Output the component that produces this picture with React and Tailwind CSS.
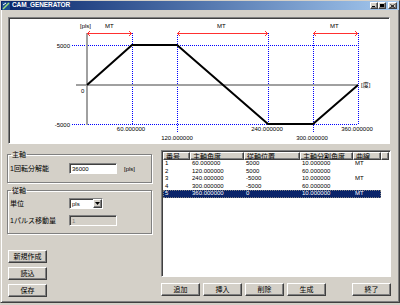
import React from 'react';

const sunken =
  'border border-t-[#808080] border-l-[#808080] border-r-white border-b-white shadow-[inset_1px_1px_0_#404040]';
const raised =
  'border border-t-white border-l-white border-r-[#404040] border-b-[#404040] shadow-[inset_-1px_-1px_0_#808080]';
const groupBox =
  'border border-[#808080] shadow-[inset_1px_1px_0_#fff,1px_1px_0_#fff]';

const ROWS = [
  ['1', '60.000000', '5000', '10.000000', 'MT'],
  ['2', '120.000000', '5000', '60.000000', ''],
  ['3', '240.000000', '-5000', '10.000000', 'MT'],
  ['4', '300.000000', '-5000', '60.000000', ''],
  ['5', '360.000000', '0', '10.000000', 'MT'],
];

const COLS = [
  { label: '番号', w: 'w-[27px]' },
  { label: '主軸角度', w: 'w-[54px]' },
  { label: '従軸位置', w: 'w-[56px]' },
  { label: '主軸分割角度', w: 'w-[53px]' },
  { label: '曲線', w: 'w-[28px]' },
];

const Button = ({ children, className = '' }) => (
  <div
    className={`${raised} bg-[#d4d0c8] h-[13px] w-[39px] flex items-center justify-center text-[7px] leading-none text-black ${className}`}
  >
    {children}
  </div>
);

const TitleBar = () => (
  <div className="h-[9px] flex items-center bg-gradient-to-r from-[#0a246a] to-[#a6caf0] pl-[1px] pr-[2px]">
    <svg width="8" height="8" viewBox="0 0 8 8">
      <rect x="0" y="0" width="8" height="8" fill="#1c4f8c" />
      <path d="M1 7 L7 1" stroke="#9fe07a" strokeWidth="1.5" />
      <path d="M1 3 L4 1" stroke="#ffffff" strokeWidth="1" />
    </svg>
    <span className="ml-[2px] text-[6.5px] font-bold text-white leading-none tracking-[-0.1px]">
      CAM_GENERATOR
    </span>
    <div className="ml-auto flex items-center">
      <div className={`${raised} bg-[#d4d0c8] w-[8px] h-[7px] relative`}>
        <div className="absolute left-[1px] bottom-[1px] w-[3px] h-[1px] bg-black" />
      </div>
      <div className={`${raised} bg-[#d4d0c8] w-[8px] h-[7px] flex items-center justify-center`}>
        <div className="w-[4px] h-[3px] border border-black border-t-2" />
      </div>
      <div className={`${raised} bg-[#d4d0c8] w-[9px] h-[7px] ml-[2px] flex items-center justify-center`}>
        <svg width="5" height="4" viewBox="0 0 5 4">
          <path d="M0.5 0.5 L4.5 3.5 M4.5 0.5 L0.5 3.5" stroke="#000" strokeWidth="1" />
        </svg>
      </div>
    </div>
  </div>
);

const Chart = () => {
  const blue = '#0000ff';
  const red = '#ff3030';
  const arrows = [
    [87, 132],
    [177, 268],
    [313, 358],
  ];
  const verticals = [
    [132.5, 124],
    [177.5, 133],
    [268.5, 124],
    [313.5, 133],
    [358.5, 124],
  ];
  const labels = [
    [131, 131, '60.000000'],
    [177, 140, '120.000000'],
    [267, 131, '240.000000'],
    [312, 140, '300.000000'],
    [357, 131, '360.000000'],
  ];
  return (
    <div className={`${sunken} bg-white ml-[7px] mt-[7px] w-[382px] h-[127px]`}>
      <svg width="380" height="125" viewBox="9 18 380 125" className="block font-['Liberation_Sans','Noto_Sans_CJK_JP',sans-serif]">
        <line x1="72" y1="45.5" x2="358" y2="45.5" stroke={blue} strokeDasharray="1 1" />
        <line x1="72" y1="124.5" x2="358" y2="124.5" stroke={blue} strokeDasharray="1 1" />
        {verticals.map(([x, y2]) => (
          <line key={x} x1={x} y1="33" x2={x} y2={y2} stroke={blue} strokeDasharray="1 1" />
        ))}
        <line x1="87" y1="33" x2="87" y2="125" stroke="#a0a0a0" strokeWidth="2" />
        <line x1="76" y1="85" x2="358" y2="85" stroke="#a0a0a0" strokeWidth="2" />
        {arrows.map(([a, b]) => (
          <g key={a} stroke={red} strokeWidth="1" fill="none">
            <line x1={a} y1="33.5" x2={b} y2="33.5" />
            <polyline points={`${a + 3},31 ${a + 0.5},33.5 ${a + 3},36`} />
            <polyline points={`${b - 3},31 ${b - 0.5},33.5 ${b - 3},36`} />
          </g>
        ))}
        <polyline
          points="87,85 132,45 177,45 268,124 313,124 358,85"
          fill="none"
          stroke="#000"
          strokeWidth="2"
        />
        <g fontSize="6" fill="#000">
          <text x="80" y="28">[pls]</text>
          <text x="105" y="28">MT</text>
          <text x="217" y="28">MT</text>
          <text x="330" y="28">MT</text>
          <text x="70" y="48" textAnchor="end">5000</text>
          <text x="81" y="93">0</text>
          <text x="70" y="127" textAnchor="end">-5000</text>
          <text x="361" y="87">[度]</text>
          {labels.map(([x, y, t]) => (
            <text key={t} x={x} y={y} textAnchor="middle">{t}</text>
          ))}
        </g>
      </svg>
    </div>
  );
};

const Fields = () => (
  <div className="ml-[6px] w-[145px] flex flex-col">
    <fieldset className={`${groupBox} px-[2px] pt-[4px] pb-[8px]`}>
      <legend className="ml-[1px] px-[1px] text-[7px] leading-[9px]">主軸</legend>
      <div className="flex items-center">
        <span className="w-[59px] text-[7px] leading-none">1回転分解能</span>
        <div className={`${sunken} bg-white w-[48px] h-[11px] flex items-center px-[2px] text-[6px] leading-none`}>
          36000
        </div>
        <span className="ml-[7px] text-[6px] leading-none">[pls]</span>
      </div>
    </fieldset>
    <fieldset className={`${groupBox} mt-[3px] px-[2px] pt-[3px] pb-[7px]`}>
      <legend className="ml-[1px] px-[1px] text-[7px] leading-[9px]">従軸</legend>
      <div className="flex items-center">
        <span className="w-[59px] text-[7px] leading-none">単位</span>
        <div className={`${sunken} bg-white w-[34px] h-[11px] flex items-center pl-[2px] text-[6px] leading-none`}>
          <span className="flex-1">pls</span>
          <div className={`${raised} bg-[#d4d0c8] w-[9px] h-[9px] flex items-center justify-center`}>
            <svg width="5" height="3" viewBox="0 0 5 3">
              <path d="M0 0 H5 L2.5 3 Z" fill="#000" />
            </svg>
          </div>
        </div>
      </div>
      <div className="flex items-center mt-[6px]">
        <span className="w-[59px] text-[7px] leading-none">1パルス移動量</span>
        <div className={`${sunken} bg-[#d4d0c8] w-[48px] h-[11px] flex items-center px-[2px] text-[6px] leading-none text-[#808080]`}>
          1
        </div>
      </div>
    </fieldset>
    <div className="mt-[16px] ml-[1px] flex flex-col gap-[4px]">
      <Button>新規作成</Button>
      <Button className="h-[13px]">読込</Button>
      <Button>保存</Button>
    </div>
  </div>
);

const List = () => (
  <div className="ml-[9px] w-[230px] flex flex-col">
    <div className={`${sunken} bg-white h-[127px] p-[1px] overflow-hidden`}>
      <div className="flex h-[8px]">
        {COLS.map((c) => (
          <div
            key={c.label}
            className={`${c.w} ${raised} bg-[#d4d0c8] text-[7px] leading-none flex items-center pl-[2px] whitespace-nowrap overflow-hidden`}
          >
            {c.label}
          </div>
        ))}
        <div className={`flex-1 ${raised} bg-[#d4d0c8]`} />
      </div>
      {ROWS.map((r, i) => {
        const sel = i === ROWS.length - 1;
        return (
          <div
            key={r[0]}
            className={`flex h-[7.5px] w-[218px] text-[6px] leading-[7.5px] ${sel ? 'bg-[#0a246a] text-white outline outline-1 outline-dotted outline-[#808080] -outline-offset-1' : 'text-black'}`}
          >
            {r.map((v, j) => (
              <div key={j} className={`${COLS[j].w} pl-[2px] whitespace-nowrap`}>
                {v}
              </div>
            ))}
          </div>
        );
      })}
    </div>
    <div className="mt-[6px] flex gap-[3px]">
      <Button>追加</Button>
      <Button>挿入</Button>
      <Button>削除</Button>
      <Button>生成</Button>
      <Button className="ml-auto">終了</Button>
    </div>
  </div>
);

export default function App() {
  return (
    <div className="w-[400px] h-[305px] bg-[#d4d0c8] font-['Liberation_Sans','Noto_Sans_CJK_JP',sans-serif] text-black">
      <div className="w-[400px] h-[303px] border border-t-[#d4d0c8] border-l-[#d4d0c8] border-r-[#404040] border-b-[#404040] shadow-[inset_1px_1px_0_#fff,inset_-1px_-1px_0_#808080] flex flex-col">
        <TitleBar />
        <Chart />
        <div className="flex items-start mt-[6px]">
          <Fields />
          <List />
        </div>
      </div>
    </div>
  );
}
